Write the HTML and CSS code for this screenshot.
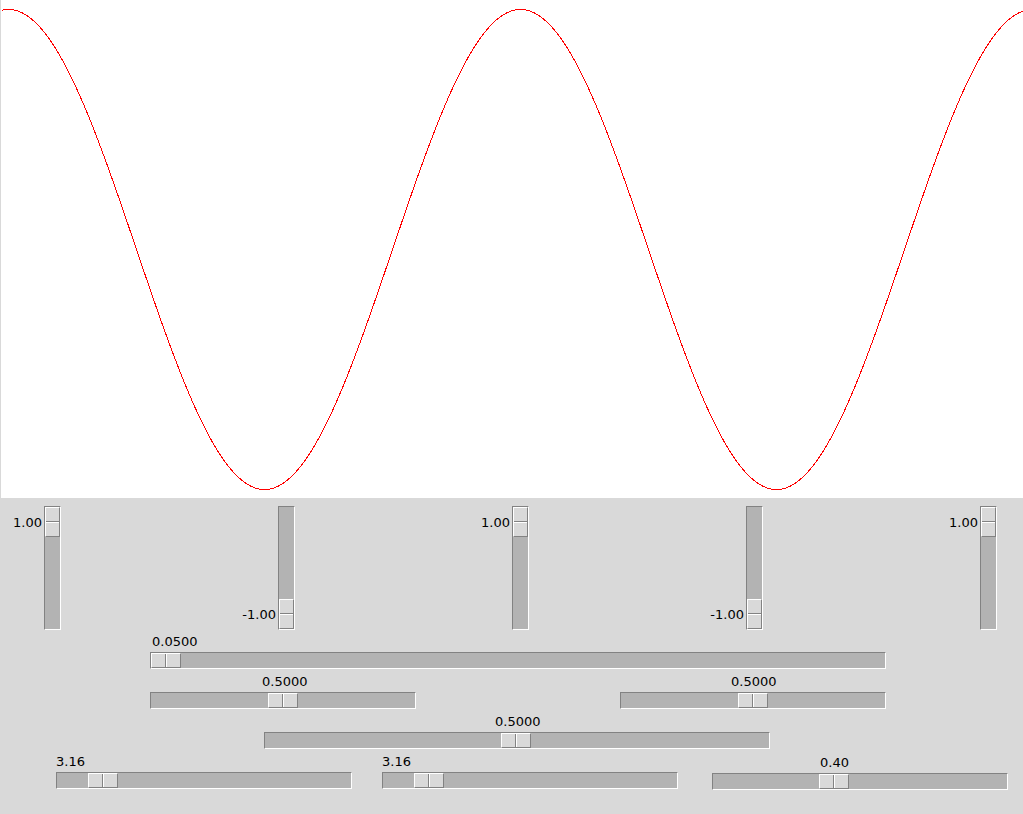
FILE: index.html
```html
<!DOCTYPE html>
<html>
<head>
<meta charset="utf-8">
<link rel="stylesheet" href="styles.css">
</head>
<body>
<div class="canvas">
  <svg class="plot" width="1022" height="498" viewBox="0 0 1022 498">
    <polyline id="wave" class="wave" points=""/>
  </svg>
</div>
<div class="controls">
  <div class="vrow">
    <div class="vscale">
      <div class="vlabel" style="padding-top:9px">1.00</div>
      <div class="vtrough"><div class="vthumb" style="top:0px"></div></div>
    </div>
    <div class="vscale">
      <div class="vlabel" style="padding-top:101px">-1.00</div>
      <div class="vtrough"><div class="vthumb" style="top:92px"></div></div>
    </div>
    <div class="vscale">
      <div class="vlabel" style="padding-top:9px">1.00</div>
      <div class="vtrough"><div class="vthumb" style="top:0px"></div></div>
    </div>
    <div class="vscale">
      <div class="vlabel" style="padding-top:101px">-1.00</div>
      <div class="vtrough"><div class="vthumb" style="top:92px"></div></div>
    </div>
    <div class="vscale">
      <div class="vlabel" style="padding-top:9px">1.00</div>
      <div class="vtrough"><div class="vthumb" style="top:0px"></div></div>
    </div>
  </div>

  <div class="hrow row-a">
    <div class="hscale w736">
      <div class="hlabel" style="padding-left:2px">0.0500</div>
      <div class="htrough"><div class="hthumb" style="left:0px"></div></div>
    </div>
  </div>

  <div class="hrow row-b">
    <div class="hscale w266">
      <div class="hlabel" style="padding-left:112px">0.5000</div>
      <div class="htrough"><div class="hthumb" style="left:117px"></div></div>
    </div>
    <div class="hscale w266">
      <div class="hlabel" style="padding-left:111px">0.5000</div>
      <div class="htrough"><div class="hthumb" style="left:117px"></div></div>
    </div>
  </div>

  <div class="hrow row-c">
    <div class="hscale w506">
      <div class="hlabel" style="padding-left:231px">0.5000</div>
      <div class="htrough"><div class="hthumb" style="left:236px"></div></div>
    </div>
  </div>

  <div class="hrow row-d">
    <div class="hscale w296">
      <div class="hlabel" style="padding-left:0px">3.16</div>
      <div class="htrough"><div class="hthumb" style="left:31px"></div></div>
    </div>
    <div class="hscale w296">
      <div class="hlabel" style="padding-left:0px">3.16</div>
      <div class="htrough"><div class="hthumb" style="left:31px"></div></div>
    </div>
    <div class="hscale w296 low">
      <div class="hlabel" style="padding-left:108px">0.40</div>
      <div class="htrough"><div class="hthumb" style="left:106px"></div></div>
    </div>
  </div>
</div>
<script src="script.js"></script>
</body>
</html>
```

FILE: styles.css
```css
html, body {
  margin: 0;
  padding: 0;
}
body {
  width: 1023px;
  height: 814px;
  overflow: hidden;
  background: #d9d9d9;
  font-family: "DejaVu Sans", "Noto Sans", sans-serif;
  font-size: 13px;
  color: #000;
}
.canvas {
  box-sizing: border-box;
  width: 1023px;
  height: 498px;
  border-left: 1px solid #d9d9d9;
  background: #fff;
}
.plot {
  display: block;
}
.wave {
  fill: none;
  stroke: #ff0000;
  stroke-width: 1;
  shape-rendering: crispEdges;
}
.controls {
  display: flex;
  flex-direction: column;
}
.vrow {
  display: flex;
  gap: 173px;
  padding-top: 8px;
  height: 124px;
}
.vscale {
  display: flex;
  width: 61px;
  flex: 0 0 61px;
}
.vlabel {
  box-sizing: border-box;
  width: 44px;
  padding-right: 2px;
  text-align: right;
  line-height: 15px;
  white-space: nowrap;
}
.vtrough, .htrough {
  position: relative;
  box-sizing: border-box;
  background: #b3b3b3;
  border-top: 1px solid #828282;
  border-left: 1px solid #828282;
  border-bottom: 1px solid #ffffff;
  border-right: 1px solid #ffffff;
}
.vtrough {
  width: 17px;
  height: 124px;
}
.vthumb, .hthumb {
  position: absolute;
  box-sizing: border-box;
  background: #d9d9d9;
  border-top: 1px solid #ffffff;
  border-left: 1px solid #ffffff;
  border-bottom: 1px solid #828282;
  border-right: 1px solid #828282;
}
.vthumb {
  left: 0;
  width: 15px;
  height: 30px;
}
.vthumb::after {
  content: "";
  position: absolute;
  left: 0;
  right: 0;
  top: 13px;
  height: 0;
  border-top: 1px solid #828282;
  border-bottom: 1px solid #ffffff;
}
.hthumb {
  top: 0;
  width: 30px;
  height: 15px;
}
.hthumb::after {
  content: "";
  position: absolute;
  top: 0;
  bottom: 0;
  left: 13px;
  width: 0;
  border-left: 1px solid #828282;
  border-right: 1px solid #ffffff;
}
.hrow {
  display: flex;
  margin-top: 5px;
}
.row-a {
  margin-top: 4px;
  padding-left: 150px;
}
.row-b {
  padding-left: 150px;
  gap: 204px;
}
.row-c {
  padding-left: 264px;
}
.row-d {
  padding-left: 56px;
  gap: 30px;
}
.row-d .low {
  margin-left: 4px;
  margin-top: 1px;
}
.hscale {
  display: flex;
  flex-direction: column;
}
.hlabel {
  height: 15px;
  line-height: 15px;
  margin-bottom: 3px;
  white-space: nowrap;
}
.htrough {
  height: 17px;
}
.w736 { width: 736px; }
.w266 { width: 266px; }
.w506 { width: 506px; }
.w296 { width: 296px; }
```

FILE: script.js
```js
(function () {
  var pts = [];
  for (var x = 0; x <= 1022; x++) {
    var px = x + 1;
    var y = 249 - 240 * Math.cos(2 * Math.PI * (px - 8) / 512);
    pts.push((x + 0.5) + "," + (y + 0.5).toFixed(2));
  }
  document.getElementById("wave").setAttribute("points", pts.join(" "));
})();
```
